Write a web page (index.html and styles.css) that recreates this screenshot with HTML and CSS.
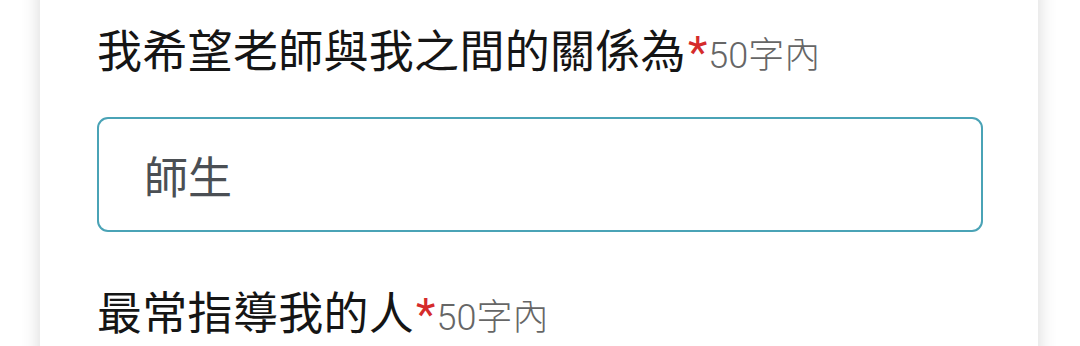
FILE: index.html
```html
<!DOCTYPE html>
<html lang="zh-Hant">
<head>
<meta charset="utf-8">
<link rel="stylesheet" href="styles.css">
</head>
<body>
<div class="card">
  <div class="field">
    <div class="label"><span class="text">我希望老師與我之間的關係為</span><span class="req">*</span><span class="hint">50字內</span></div>
    <div class="input">師生</div>
  </div>
  <div class="field">
    <div class="label"><span class="text">最常指導我的人</span><span class="req">*</span><span class="hint">50字內</span></div>
  </div>
</div>
</body>
</html>
```
FILE: styles.css
```css
html, body {
  margin: 0;
  padding: 0;
  background: #ffffff;
  overflow: hidden;
  height: 346px;
}
body {
  font-family: Roboto, "Noto Sans CJK TC", "Noto Sans", sans-serif;
}
.card {
  margin: -20px 0 0 40px;
  width: 998px;
  height: 400px;
  box-sizing: border-box;
  background: #fff;
  box-shadow: 0 0 18px rgba(0, 0, 0, 0.16);
  padding: 43px 55px 0 57px;
  display: flex;
  flex-direction: column;
  gap: 53px;
}
.field {
  display: flex;
  flex-direction: column;
  gap: 34px;
}
.label {
  font-size: 45px;
  line-height: 60px;
  height: 60px;
  color: #151515;
  white-space: nowrap;
}
.text {
  letter-spacing: 0.3px;
}
.req {
  color: #d52b2b;
  font-size: 45px;
  margin-left: 2px;
}
.hint {
  font-size: 36px;
  font-weight: 300;
  color: #666666;
  margin-left: 1px;
}
.input {
  height: 115px;
  box-sizing: border-box;
  border: 2px solid #4aa3b6;
  border-radius: 11px;
  padding-left: 45px;
  display: flex;
  align-items: center;
  font-size: 44px;
  color: #4b4f54;
}
```
